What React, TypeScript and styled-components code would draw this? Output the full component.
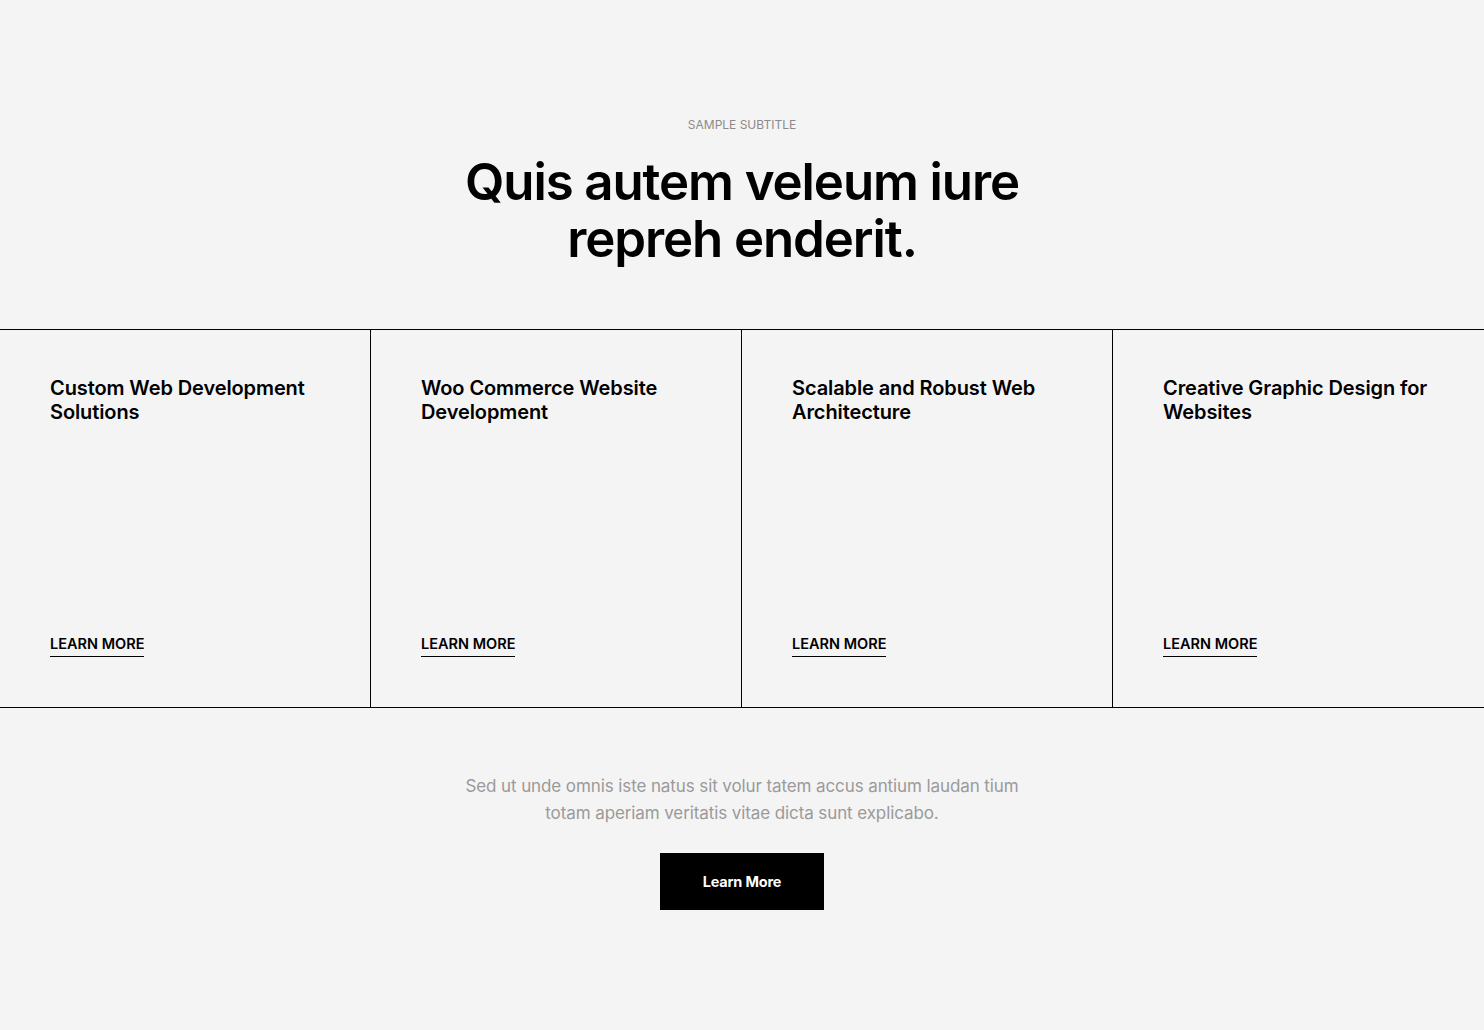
import React from "react";
import styled, { createGlobalStyle } from "styled-components";

const Global = createGlobalStyle`
  html, body { margin: 0; padding: 0; background: #f4f4f4; }
  body { font-family: Inter, "Noto Sans", sans-serif; color: #000; }
  * { box-sizing: border-box; }
`;

const Page = styled.main`
  min-height: 1030px;
  padding-top: 116px;
  display: flex;
  flex-direction: column;
  align-items: center;
`;

const Subtitle = styled.div`
  font-size: 12px;
  line-height: 18px;
  color: #8a8a8a;
  text-transform: uppercase;
  letter-spacing: 0;
`;

const Heading = styled.h1`
  margin: 19px 0 0;
  font-size: 51px;
  line-height: 57px;
  font-weight: 600;
  letter-spacing: -1.1px;
  text-align: center;
`;

const Grid = styled.section`
  margin-top: 62px;
  width: 100%;
  display: grid;
  grid-template-columns: repeat(4, 1fr);
  border-top: 1px solid #000;
  border-bottom: 1px solid #000;
`;

const Card = styled.div<{ $last?: boolean }>`
  height: 377px;
  padding: 46px 30px 49px 50px;
  border-right: ${(p) => (p.$last ? "none" : "1px solid #000")};
  display: flex;
  flex-direction: column;
  justify-content: space-between;
  align-items: flex-start;
`;

const CardTitle = styled.h3`
  margin: 0;
  font-size: 20px;
  line-height: 24px;
  font-weight: 600;
  letter-spacing: -0.1px;
`;

const CardLink = styled.a`
  font-size: 14.5px;
  line-height: 18px;
  font-weight: 600;
  color: #000;
  text-decoration: none;
  border-bottom: 1.5px solid #000;
  padding-bottom: 3px;
  margin-bottom: 1px;
  letter-spacing: 0;
`;

const Text = styled.p`
  margin: 65px 0 0;
  font-size: 17px;
  line-height: 27px;
  color: #9a9a9a;
  text-align: center;
  letter-spacing: -0.1px;
`;

const Button = styled.button`
  margin-top: 26px;
  width: 164px;
  height: 57px;
  border: none;
  background: #000;
  color: #fff;
  font-family: inherit;
  font-size: 14.5px;
  font-weight: 700;
  letter-spacing: -0.2px;
  cursor: pointer;
`;

const cards = [
  ["Custom Web Development", "Solutions"],
  ["Woo Commerce Website", "Development"],
  ["Scalable and Robust Web", "Architecture"],
  ["Creative Graphic Design for", "Websites"],
];

export default function App() {
  return (
    <>
      <Global />
      <Page>
        <Subtitle>Sample Subtitle</Subtitle>
        <Heading>
          Quis autem veleum iure
          <br />
          repreh enderit.
        </Heading>
        <Grid>
          {cards.map(([a, b], i) => (
            <Card key={i} $last={i === cards.length - 1}>
              <CardTitle>
                {a}
                <br />
                {b}
              </CardTitle>
              <CardLink href="#">LEARN MORE</CardLink>
            </Card>
          ))}
        </Grid>
        <Text>
          Sed ut unde omnis iste natus sit volur tatem accus antium laudan tium
          <br />
          totam aperiam veritatis vitae dicta sunt explicabo.
        </Text>
        <Button>Learn More</Button>
      </Page>
    </>
  );
}
